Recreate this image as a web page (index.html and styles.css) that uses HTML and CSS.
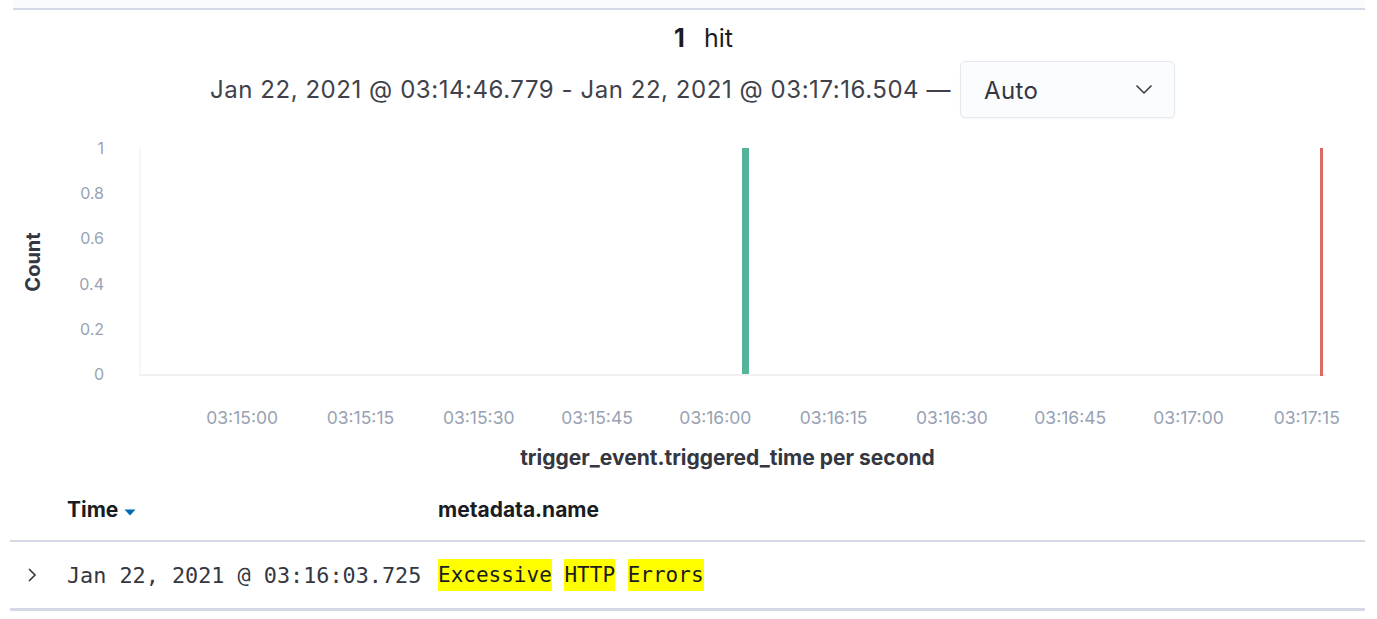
FILE: index.html
```html
<!DOCTYPE html>
<html>
<head>
<meta charset="utf-8">
<link rel="stylesheet" href="styles.css">
</head>
<body>
<div class="page">
  <div class="topband"></div>
  <div class="hits"><strong>1</strong> hit</div>
  <div class="range">
    <span class="range-text">Jan 22, 2021 @ 03:14:46.779 - Jan 22, 2021 @ 03:17:16.504 —</span>
    <div class="select">
      <span>Auto</span>
      <svg class="chev" width="18" height="11" viewBox="0 0 18 11"><path d="M1.5 1.5 L9 9 L16.5 1.5" fill="none" stroke="#343741" stroke-width="1.5"/></svg>
    </div>
  </div>
  <div class="chart">
    <div class="ytitle"><span>Count</span></div>
    <div class="ylabels">
      <span>1</span><span>0.8</span><span>0.6</span><span>0.4</span><span>0.2</span><span>0</span>
    </div>
    <div class="plot">
      <div class="bar" style="left: 601px"></div>
      <div class="now" style="left: 1179px"></div>
    </div>
  </div>
  <div class="xlabels">
    <span>03:15:00</span><span>03:15:15</span><span>03:15:30</span><span>03:15:45</span><span>03:16:00</span><span>03:16:15</span><span>03:16:30</span><span>03:16:45</span><span>03:17:00</span><span>03:17:15</span>
  </div>
  <div class="xtitle">trigger_event.triggered_time per second</div>
  <div class="table">
    <div class="thead">
      <div class="c-exp"></div>
      <div class="c-time">Time <svg class="sort" width="12" height="7" viewBox="0 0 12 7"><path d="M0.5 0.5 H11.5 L6 6.5 Z" fill="#006bb4"/></svg></div>
      <div class="c-name">metadata.name</div>
    </div>
    <div class="trow">
      <div class="c-exp"><svg width="10" height="16" viewBox="0 0 10 16"><path d="M2 2 L8 8 L2 14" fill="none" stroke="#343741" stroke-width="1.6"/></svg></div>
      <div class="c-time mono">Jan 22, 2021 @ 03:16:03.725</div>
      <div class="c-name mono"><mark>Excessive</mark> <mark>HTTP</mark> <mark>Errors</mark></div>
    </div>
  </div>
</div>
</body>
</html>
```
FILE: styles.css
```css
* { box-sizing: border-box; }
html, body { margin: 0; padding: 0; background: #fff; }
body { font-family: Inter, "Noto Sans", sans-serif; color: #343741; width: 1377px; height: 619px; overflow: hidden; }
.page { position: relative; }
.topband { height: 10px; margin: 0 12px 0 13px; background: #fafbfd; border-bottom: 2px solid #d3dae6; }
.hits { text-align: center; font-size: 25px; line-height: 30px; margin-top: 13px; color: #1a1c21; padding-left: 30px; }
.hits strong { font-weight: 700; margin-right: 12px; }
.range { display: flex; justify-content: center; align-items: center; margin-top: 8px; padding-left: 8px; gap: 9px; }
.range-text { font-size: 24px; letter-spacing: 0.55px; color: #3f424a; }
.select { width: 215px; height: 57px; border: 1px solid #e3e8f0; border-radius: 5px; background: #fbfcfd; display: flex; align-items: center; justify-content: space-between; padding: 0 21px 0 23px; font-size: 24px; letter-spacing: 0.4px; color: #343741; box-shadow: 0 1px 2px rgba(0,0,0,0.04); }
.select span { margin-top: 2px; }
.chart { display: flex; margin-top: 21px; height: 250px; }
.ytitle { width: 66px; display: flex; align-items: center; justify-content: center; }
.ytitle span { transform: rotate(-90deg); font-weight: 700; font-size: 20px; color: #343741; display: block; margin-top: -4px; }
.ylabels { width: 38px; display: flex; flex-direction: column; justify-content: space-between; align-items: flex-end; font-size: 16px; color: #98a2b3; line-height: 18px; height: 244px; }
.plot { position: relative; margin-left: 35px; width: 1187px; height: 228px; margin-top: 9px; border-left: 2px solid #f5f7fa; border-bottom: 2px solid #eef0f3; }
.bar { position: absolute; top: 0; bottom: 0; width: 7px; background: #54b399; }
.now { position: absolute; top: 0; bottom: -2px; width: 3px; background: #dc6b67; }
.xlabels { display: flex; padding-left: 183px; margin-top: 18px; font-size: 17.5px; color: #98a2b3; line-height: 22px; }
.xlabels span { width: 118.3px; text-align: center; flex: none; }
.xtitle { text-align: center; font-weight: 700; font-size: 21px; color: #343741; padding-left: 78px; margin-top: 16px; line-height: 26px; }
.table { margin: 14px 12px 0 10px; }
.thead { display: flex; align-items: center; height: 57px; padding-bottom: 6px; border-bottom: 2px solid #d3dae6; font-weight: 700; font-size: 21px; color: #1a1c21; }
.trow { display: flex; align-items: center; height: 69px; border-bottom: 3px solid #d3dae6; }
.c-exp { width: 57px; padding-left: 17px; display: flex; align-items: center; }
.c-time { width: 371px; display: flex; align-items: center; gap: 6px; }
.c-name { flex: 1; }
.sort { margin-top: 5px; }
.mono { font-family: "DejaVu Sans Mono", "Liberation Mono", monospace; font-size: 21.8px; color: #343741; }
.c-name.mono { color: #1a1c21; font-size: 21px; }
mark { background: #ffff00; color: #1a1c21; padding: 4px 0; }
```
